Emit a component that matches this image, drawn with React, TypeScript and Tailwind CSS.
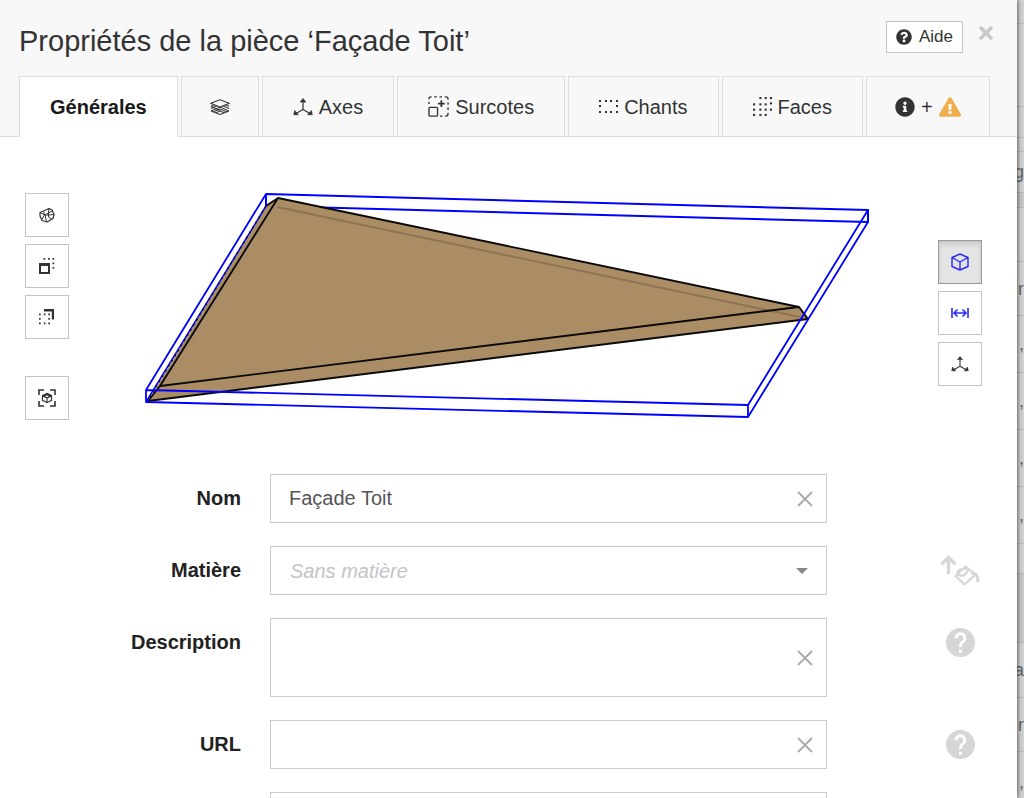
import type { ReactNode } from "react";
import { FaExclamationTriangle, FaInfoCircle, FaQuestionCircle, FaTimes } from "react-icons/fa";
import { MdHelp } from "react-icons/md";

function LayersIcon() {
  return (
    <svg viewBox="0 0 22 16" className="h-4 w-5" preserveAspectRatio="none" fill="none" stroke="#3a3a3a" strokeWidth="1.1">
      <path d="M11 .8 1 4.200l3 1.200 7 2.600 7-2.600 3-1.200z" />
      <path d="M1 7.200l4-1.500M21 7.200l-4-1.500M1 9.600l7-2.800M21 9.600l-7-2.800M1 12l10-4 10 4M3.200 13 11 10l7.800 3M6.500 13.800l4.500-1.700 4.500 1.700M1 7.200l10 4.200M1 12l10 3.500L21 12" />
    </svg>
  );
}

function AxesIcon({ className }: { className: string }) {
  return (
    <svg viewBox="0 0 20 18" className={className} fill="#333" stroke="#333">
      <path d="M10 3v8.5L3 15.5M10 11.5l7 4" fill="none" strokeWidth="1.2" />
      <path d="M10 .5 7.200 4h5.600zM.7 16.700l1-4.200 3.600 4.200zM19.300 16.700l-1-4.200-3.600 4.200z" strokeWidth=".7" />
    </svg>
  );
}

function OversizeIcon() {
  return (
    <svg viewBox="0 0 22 22" className="size-[21px]" fill="none" stroke="#333" strokeWidth="1.4">
      <path d="M1 8.5V6M1 3.5V3Q1 1 3 1h.8M6.5 1h2.7M12 1h2.7M17.5 1h1.2Q21 1 21 3v1M21 6.5v2.7M21 12v2.7M21 17.5v1.2q0 2.300-2 2.300h-1M15.2 21h-2.7" />
      <rect x="1" y="12" width="9" height="9" rx="1" />
      <path d="M10.500 8h7M14 4.500v7" strokeWidth="1.8" />
    </svg>
  );
}

function Dots({ points, className, box }: { points: number[][]; className: string; box: string }) {
  return (
    <svg viewBox={box} className={className} fill="#333">
      {points.map(([x, y]) => (
        <rect key={`${x}-${y}`} x={x} y={y} width={2} height={2} />
      ))}
    </svg>
  );
}

const edgeDots = [[0, 0], [6, 0], [11, 0], [17, 0], [0, 5], [17, 5], [0, 11], [6, 11], [11, 11], [17, 11]];
const faceDots = [
  [6, 0], [11, 0], [16, 0], [0, 6], [6, 6], [11, 6], [16, 5], [0, 11], [6, 11], [11, 11], [16, 11], [0, 16], [6, 16], [11, 16],
];

function RotatedCubeIcon() {
  return (
    <svg viewBox="0 0 16 16" className="h-4 w-4" fill="none" stroke="#333" strokeWidth="1.2" strokeLinejoin="round">
      <path d="m1 5.500 9-4 3 1.500 2 4.500-1 4-6 3.500-5-1.500L1 9z" />
      <path d="m1 5.500 5 2.500L14 3.500M6 8l1.500 6.500M6 8h4l5-.500M10 1.500 9.500 5v5l3.500 2.500M5 4.500v4L3 12.500" strokeWidth="1" />
    </svg>
  );
}

function FrontFaceIcon() {
  return (
    <svg viewBox="0 0 16 16" className="h-4 w-4" fill="#333">
      <path d="M0 5h11v11H0zm2 3v6h7V8z" fillRule="evenodd" />
      <path d="M4.500 0h1.700v1.700H4.500zM9 0h1.700v1.700H9zM13.500 0h1.700v1.700h-1.700zM13.500 4.500h1.700v1.700h-1.700zM13.500 9h1.700v1.700h-1.700z" />
    </svg>
  );
}

function BackFaceIcon() {
  return (
    <svg viewBox="0 0 16 16" className="h-4 w-4" fill="#333">
      <path d="M5 0h10v10.500h-2.200V2.500H5z" />
      <path d="M0 4.500h1.700v1.700H0zM4.800 4.500h1.700v1.700H4.800zM9.300 4.500H11v1.700H9.300zM0 9h1.700v1.700H0zM9.300 9H11v1.700H9.300zM0 13.500h1.700v1.700H0zM4.800 13.500h1.700v1.700H4.800zM9.300 13.500H11v1.700H9.300z" />
    </svg>
  );
}

function FitIcon() {
  return (
    <svg viewBox="0 0 18 18" className="h-[18px] w-[18px]" fill="none" stroke="#333" strokeWidth="1.600">
      <path d="M1 6V1h5M12 1h5v5M17 12v5h-5M6 17H1v-5" />
      <path d="m9 4.300 4.500 2.300v4.800L9 13.700l-4.500-2.300V6.600zM4.500 6.600 9 9l4.500-2.400M9 9v4.500" strokeWidth="1.200" />
      <path d="M5 6.500 9 4.300l4 2.200L11.500 8 9 6.300 6.500 8z" fill="#333" stroke="none" />
    </svg>
  );
}

function BoxIcon() {
  return (
    <svg viewBox="0 0 18 18" className="h-[18px] w-[18px]" fill="none" stroke="#2a2aff" strokeWidth="1.400" strokeLinejoin="round">
      <path d="m9 1 8 3.500v9L9 17l-8-3.500v-9zM1 4.500 9 9l8-4.500M9 9v8" />
    </svg>
  );
}

function DimensionIcon() {
  return (
    <svg viewBox="0 0 18 12" className="h-3 w-[18px]" fill="none" stroke="#2a2aff" strokeWidth="1.600">
      <path d="M1 1v10M17 1v10M3 6h12M6.500 2.500 3 6l3.500 3.500M11.500 2.500 15 6l-3.500 3.500" />
    </svg>
  );
}

function PaintUpIcon() {
  return (
    <svg viewBox="0 0 40 32" className="h-8 w-10" fill="none" stroke="#d6d6d6" strokeWidth="2.2">
      <path d="M8.500 19V3M1.500 9.500l7-7 7 7" strokeWidth="3.400" />
      <path d="m15.500 21 10-9.500 10 8-11 10z" strokeLinejoin="round" />
      <path d="M28.500 15l-4 5q-4 2-6.500-1-1.800-4.500 5-5l5-.5" />
      <path d="M31 18.500q7-1.500 7 8.500" strokeWidth="3" />
    </svg>
  );
}

function ClearIcon() {
  return (
    <svg viewBox="0 0 16 16" className="h-4 w-4" stroke="#aaa" strokeWidth="1.800">
      <path d="m1 1 14 14M15 1 1 15" />
    </svg>
  );
}

function Tab({ active = false, compact = false, label, children }: { active?: boolean; compact?: boolean; label?: string; children: ReactNode }) {
  return (
    <button
      type="button"
      role="tab"
      aria-selected={active}
      aria-label={label}
      className={`flex h-[61px] items-center gap-1.5 border border-[#ddd] text-xl ${compact ? "px-7" : "px-[30px]"} ${
        active ? "border-b-white bg-white font-bold text-[#1a1a1a]" : "bg-[#f8f8f8] text-[#333]"
      }`}
    >
      {children}
    </button>
  );
}

function ToolButton({ label, pressed = false, children }: { label: string; pressed?: boolean; children: ReactNode }) {
  return (
    <button
      type="button"
      aria-label={label}
      aria-pressed={pressed}
      className={`flex size-11 items-center justify-center border ${
        pressed ? "border-[#999] bg-[#e4e4e4] shadow-[inset_0_3px_5px_rgba(0,0,0,0.13)]" : "border-[#c4c4c4] bg-white"
      }`}
    >
      {children}
    </button>
  );
}

function PartView() {
  return (
    <svg viewBox="69 193 869 228" className="min-w-0 flex-1" role="img" aria-label="Vue 3D" fill="none" strokeWidth="1.900" strokeLinejoin="round">
      <path d="M266 194 868 210v12L266 206z" stroke="#0000ff" />
      <path d="M278 198 799 307 808 319 148 401 266 206z" fill="#ab8d65" />
      <path d="M277 207 800 317" stroke="#8d7353" />
      <path d="M278 198 799 307 160 386zM799 307l9 12L148 401l12-15M278 198l-12 8" stroke="#0a0a0a" />
      <path d="M266 194v12L146 402" stroke="#0000ff" strokeWidth="1.500" />
      <path d="M266 206 148 400" stroke="#111" strokeWidth="1.500" strokeDasharray="2 4" />
      <path d="M266 194 146 390v12l602 15 120-195v-12L748 405v12M146 390l602 15" stroke="#0000ff" strokeWidth="1.800" />
    </svg>
  );
}

function FieldRow({ id, label, aside, children }: { id: string; label?: string; aside?: ReactNode; children: ReactNode }) {
  return (
    <div className="flex items-start">
      <div className="w-[216px] shrink-0 text-right text-xl leading-[49px] font-bold text-[#222]">
        {label && <label htmlFor={id}>{label}</label>}
      </div>
      <div className="relative ml-[29px] flex min-w-0 flex-1">{children}</div>
      <div className="ml-[111px] flex h-[49px] w-11 shrink-0 items-center justify-center">{aside}</div>
    </div>
  );
}

function ClearButton() {
  return (
    <button type="button" aria-label="Effacer" className="absolute inset-y-0 right-3.5 flex items-center">
      <ClearIcon />
    </button>
  );
}

function HelpButton() {
  return (
    <button type="button" aria-label="Aide" className="text-[#d6d6d6]">
      <MdHelp className="size-[35px]" />
    </button>
  );
}

const fieldClass =
  "block h-[49px] w-full border border-[#ccc] bg-white pr-11 pl-[18px] text-xl text-[#555] outline-none";

const backdropRows = [
  { height: "h-[24px]", text: "" },
  { height: "h-[83px]", text: "" },
  { height: "h-[31px]", text: "" },
  { height: "h-[14px]", text: "" },
  { height: "h-[41px]", text: "g" },
  { height: "h-[15px] bg-[#c8c8c8]", text: "" },
  { height: "h-[54px]", text: "" },
  { height: "h-[54px]", text: "r" },
  { height: "h-[57px]", text: "," },
  { height: "h-[57px]", text: "," },
  { height: "h-[57px]", text: "," },
  { height: "h-[57px]", text: "," },
  { height: "h-[30px]", text: "" },
  { height: "h-[69px] bg-[#c8c8c8]", text: "" },
  { height: "h-[55px]", text: "a" },
  { height: "h-[54px]", text: "r" },
  { height: "h-[60px]", text: "," },
];

export default function App() {
  return (
    <div className="flex h-screen overflow-hidden bg-[#d2d2d2] font-['Liberation_Sans',Arial,sans-serif]">
      <main className="relative min-w-0 flex-1 bg-white shadow-[0_0_5px_rgba(0,0,0,0.8)]">
        <header className="bg-[#f8f8f8]">
          <div className="flex h-[76px] items-start justify-between pr-[21px] pl-[19px]">
            <h1 className="pt-[21px] text-[29px] leading-10 text-[#333]">Propriétés de la pièce ‘Façade Toit’</h1>
            <div className="flex items-start gap-[13px] pt-[21px]">
              <button
                type="button"
                className="flex h-8 items-center gap-[7px] border border-[#c4c4c4] bg-white px-[9px] text-[17px] text-[#333]"
              >
                <FaQuestionCircle className="size-4" />
                Aide
              </button>
              <button type="button" aria-label="Fermer" className="pt-[2px] text-[#c8c8c8]">
                <FaTimes className="size-5" />
              </button>
            </div>
          </div>
          <div role="tablist" className="flex gap-[3px] pl-[19px] shadow-[inset_0_-1px_0_#ddd]">
            <Tab active>Générales</Tab>
            <Tab label="Placage" compact>
              <LayersIcon />
            </Tab>
            <Tab>
              <AxesIcon className="h-[18px] w-5" />
              Axes
            </Tab>
            <Tab>
              <OversizeIcon />
              Surcotes
            </Tab>
            <Tab>
              <Dots points={edgeDots} box="0 0 19 13" className="h-[13px] w-[19px]" />
              Chants
            </Tab>
            <Tab>
              <Dots points={faceDots} box="0 0 18 18" className="size-[19px]" />
              Faces
            </Tab>
            <Tab compact>
              <FaInfoCircle className="size-5" />
              +
              <FaExclamationTriangle className="size-[22px] text-[#f0ad4e]" />
            </Tab>
          </div>
        </header>

        <section className="flex items-start pt-14 pr-[35px] pl-[25px]">
          <div className="flex flex-col gap-[7px]">
            <ToolButton label="Vue isométrique">
              <RotatedCubeIcon />
            </ToolButton>
            <ToolButton label="Vue avant">
              <FrontFaceIcon />
            </ToolButton>
            <ToolButton label="Vue arrière">
              <BackFaceIcon />
            </ToolButton>
            <div className="pt-[30px]">
              <ToolButton label="Ajuster">
                <FitIcon />
              </ToolButton>
            </div>
          </div>
          <PartView />
          <div className="flex flex-col gap-[7px] pt-[47px]">
            <ToolButton label="Boîte englobante" pressed>
              <BoxIcon />
            </ToolButton>
            <ToolButton label="Dimensions">
              <DimensionIcon />
            </ToolButton>
            <ToolButton label="Repère">
              <AxesIcon className="h-4 w-[18px]" />
            </ToolButton>
          </div>
        </section>

        <form className="flex flex-col gap-[23px] pt-[53px] pr-[35px] pl-[25px]">
          <FieldRow id="nom" label="Nom">
            <input id="nom" type="text" defaultValue="Façade Toit" className={fieldClass} />
            <ClearButton />
          </FieldRow>
          <FieldRow
            id="matiere"
            label="Matière"
            aside={
              <button type="button" aria-label="Appliquer la matière">
                <PaintUpIcon />
              </button>
            }
          >
            <select
              id="matiere"
              className="block h-[49px] w-full appearance-none border border-[#ccc] bg-white pr-11 pl-[19px] text-xl text-[#c4c4c4] italic outline-none"
            >
              <option>Sans matière</option>
            </select>
            <span className="pointer-events-none absolute inset-y-0 right-[19px] flex items-center">
              <svg viewBox="0 0 12 6" className="h-1.5 w-3" fill="#888">
                <path d="M0 0h12L6 6z" />
              </svg>
            </span>
          </FieldRow>
          <FieldRow id="description" label="Description" aside={<HelpButton />}>
            <textarea
              id="description"
              className="block h-[79px] w-full resize-none border border-[#ccc] bg-white py-2 pr-11 pl-[18px] text-xl text-[#555] outline-none"
            />
            <ClearButton />
          </FieldRow>
          <FieldRow id="url" label="URL" aside={<HelpButton />}>
            <input id="url" type="text" className={fieldClass} />
            <ClearButton />
          </FieldRow>
          <FieldRow id="tags">
            <input id="tags" type="text" aria-label="Étiquettes" className={fieldClass} />
          </FieldRow>
        </form>
      </main>

      <aside aria-hidden="true" className="w-[7px] shrink-0 overflow-hidden text-lg text-[#666]">
        {backdropRows.map((row, index) => (
          <div key={index} className={`flex items-center justify-end border-b border-[#bbb] ${row.height}`}>
            {row.text}
          </div>
        ))}
      </aside>
    </div>
  );
}
